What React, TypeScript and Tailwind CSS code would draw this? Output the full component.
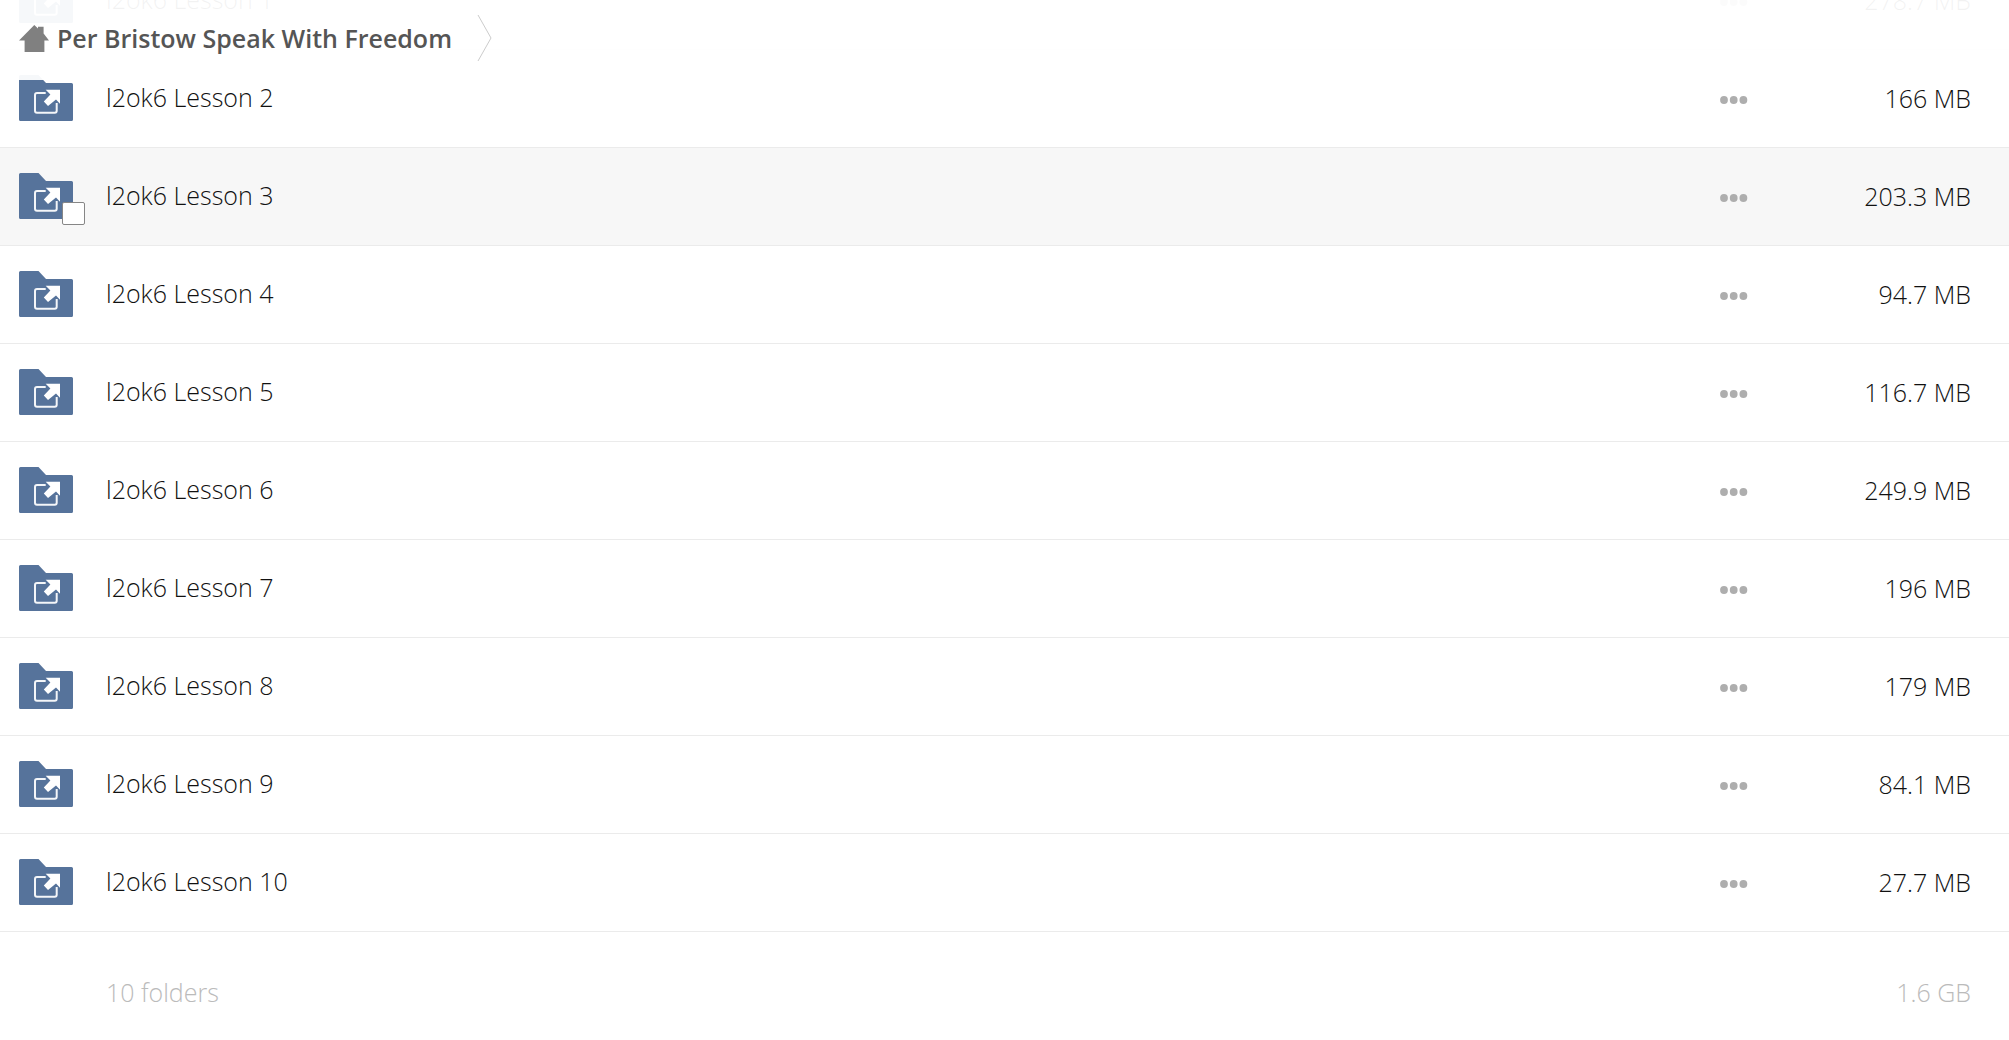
import clsx from "clsx";

interface Folder {
  name: string;
  size: string;
  hovered?: boolean;
}

const folders: Folder[] = [
  { name: "l2ok6 Lesson 1", size: "278.7 MB" },
  { name: "l2ok6 Lesson 2", size: "166 MB" },
  { name: "l2ok6 Lesson 3", size: "203.3 MB", hovered: true },
  { name: "l2ok6 Lesson 4", size: "94.7 MB" },
  { name: "l2ok6 Lesson 5", size: "116.7 MB" },
  { name: "l2ok6 Lesson 6", size: "249.9 MB" },
  { name: "l2ok6 Lesson 7", size: "196 MB" },
  { name: "l2ok6 Lesson 8", size: "179 MB" },
  { name: "l2ok6 Lesson 9", size: "84.1 MB" },
  { name: "l2ok6 Lesson 10", size: "27.7 MB" },
];

function HomeIcon() {
  return (
    <svg viewBox="0 0 30 27" className="h-[27px] w-[30px] shrink-0" fill="#808080" aria-hidden="true">
      <path d="M15.3 0 19 3.6V1.8h5.6v6.8L30 15.4h-4.6V27H5.6V15.4H0Z" />
    </svg>
  );
}

function FolderIcon() {
  return (
    <svg viewBox="0 0 54 46" className="h-[46px] w-[54px]" aria-hidden="true">
      <path
        d="M1.5 0H19.5L27 8H52.5Q54 8 54 9.5V44.5Q54 46 52.5 46H1.5Q0 46 0 44.5V1.5Q0 0 1.5 0Z"
        fill="#56739b"
      />
      <path
        d="M26.7 17.9H18Q16 17.9 16 19.9V35.7Q16 37.7 18 37.7H35.7Q37.7 37.7 37.7 35.7V28"
        fill="none"
        stroke="#f4f6f9"
        strokeWidth="2"
      />
      <path d="M26.7 14.7H41V28.8L37 24.6 29 31 24.8 26.4 31.4 19.6Z" fill="#fff" />
    </svg>
  );
}

function DotsIcon() {
  return (
    <svg viewBox="0 0 28 8" className="h-2 w-7" fill="#aeaeae" aria-hidden="true">
      <circle cx="4" cy="4" r="3.9" />
      <circle cx="13.7" cy="4" r="3.9" />
      <circle cx="23.4" cy="4" r="3.9" />
    </svg>
  );
}

function FolderRow({ name, size, hovered }: Folder) {
  return (
    <tr className={clsx("h-[98px] border-b border-[#ebebeb]", hovered && "bg-[#f7f7f7]")}>
      <td className="w-[106px] pl-[19px]">
        <div className="relative w-[54px]">
          <FolderIcon />
          {hovered && (
            <input
              type="checkbox"
              aria-label={`Select ${name}`}
              className="absolute -right-3 -bottom-1.5 size-[23px] appearance-none rounded-xs border border-[#868686] bg-white"
            />
          )}
        </div>
      </td>
      <td className="pb-0.5">
        <a href="#">{name}</a>
      </td>
      <td className="w-24 pt-1">
        <button type="button" aria-label={`More actions for ${name}`} className="block">
          <DotsIcon />
        </button>
      </td>
      <td className="w-[193px] pr-[38px] text-right">{size}</td>
    </tr>
  );
}

export default function App() {
  return (
    <div className="min-h-screen overflow-x-clip bg-white font-['Open_Sans',sans-serif] text-[25px] leading-8 font-light text-[#111]">
      <header className="sticky top-0 z-10 flex h-20 items-start bg-white/95 pl-[19px]">
        <nav aria-label="Breadcrumb" className="flex h-[76px] items-center">
          <a href="#" className="flex items-center gap-2 font-semibold text-[#555]">
            <HomeIcon />
            Per Bristow Speak With Freedom
          </a>
          <svg viewBox="0 0 16 48" className="ml-[25px] h-12 w-4" fill="none" stroke="#ccc" aria-hidden="true">
            <path d="M1 1 14 24 1 47" />
          </svg>
        </nav>
      </header>

      {/* list is scrolled partway under the translucent header */}
      <main className="-mt-[129px]">
        <table className="w-full border-collapse">
          <tbody>
            {folders.map((folder) => (
              <FolderRow key={folder.name} {...folder} />
            ))}
          </tbody>
        </table>
        <footer className="flex justify-between pt-11 pr-[38px] pb-8 pl-[106px] text-[#bbb]">
          <span>10 folders</span>
          <span>1.6 GB</span>
        </footer>
      </main>
    </div>
  );
}
